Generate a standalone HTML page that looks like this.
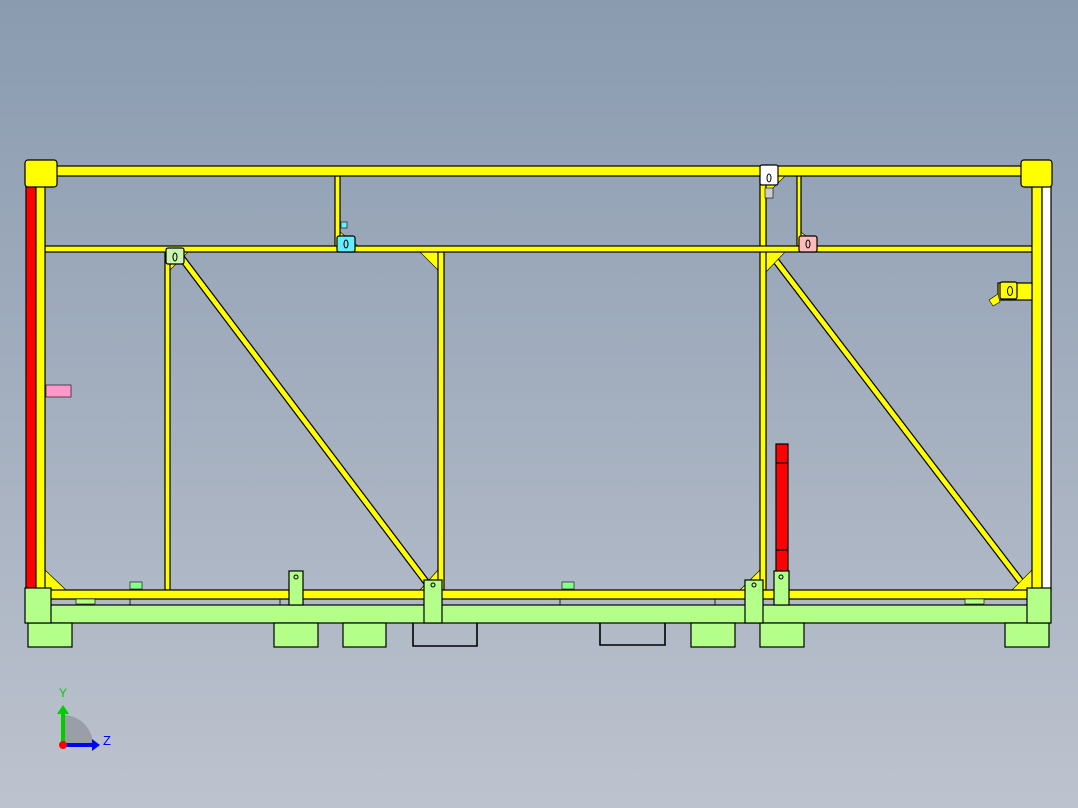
<!DOCTYPE html>
<html><head><meta charset="utf-8"><style>
html,body{margin:0;padding:0;width:1078px;height:808px;overflow:hidden}
body{background:linear-gradient(#8a9bb0,#bdc3ce);}
svg{position:absolute;left:0;top:0}
</style></head><body>
<svg width="1078" height="808" viewBox="0 0 1078 808">
<g stroke="#000" stroke-width="1.2">
<!-- diagonals -->
<polygon points="178,258 184,256 433,586 427,588" fill="#ff0"/>
<polygon points="770,258 776,256 1028,586 1022,588" fill="#ff0"/>
<!-- gussets -->
<polygon points="420,252 438,252 438,270" fill="#ff0" stroke-width="0.6"/>
<polygon points="766,252 785,252 766,272" fill="#ff0" stroke-width="0.6"/>
<polygon points="170,252 188,252 170,270" fill="#ff0" stroke-width="0.6"/>
<polygon points="766,176 785,176 766,195" fill="#ff0" stroke-width="0.6"/>
<polygon points="45,570 66,590 45,590" fill="#ff0" stroke-width="0.6"/>
<polygon points="1032,570 1012,590 1032,590" fill="#ff0" stroke-width="0.6"/>
<polygon points="438,570 420,590 438,590" fill="#ff0" stroke-width="0.6"/>
<polygon points="760,570 740,590 760,590" fill="#ff0" stroke-width="0.6"/>
<polygon points="340,232 340,246 358,246" fill="#ff0" stroke-width="0.6"/>
<polygon points="801,232 801,246 818,246" fill="#ff0" stroke-width="0.6"/>
<!-- verticals -->
<rect x="165" y="252" width="5" height="338" fill="#ff0"/>
<rect x="438" y="252" width="6" height="338" fill="#ff0"/>
<rect x="760" y="176" width="6" height="414" fill="#ff0"/>
<rect x="335" y="176" width="5" height="70" fill="#ff0"/>
<rect x="797" y="176" width="4" height="70" fill="#ff0"/>
<!-- middle rail -->
<rect x="45" y="246" width="987" height="6" fill="#ff0"/>
<!-- top rail -->
<rect x="55" y="166" width="967" height="10" fill="#ff0"/>
<!-- left column -->
<rect x="26" y="186" width="10" height="404" fill="#f00"/>
<rect x="36" y="186" width="9" height="404" fill="#ff0"/>
<!-- right column -->
<rect x="1032" y="186" width="10" height="404" fill="#ff0"/>
<rect x="1042" y="186" width="9" height="404" fill="#fff"/>
<!-- corners -->
<rect x="25" y="160" width="32" height="27" rx="3" fill="#ff0"/>
<rect x="1021" y="160" width="31" height="27" rx="3" fill="#ff0"/>
<!-- clamps -->
<rect x="166" y="248" width="18" height="16" rx="2" fill="#c8f5b0"/>
<rect x="337" y="236" width="18" height="16" rx="2" fill="#6ef"/>
<rect x="341" y="222" width="6" height="6" fill="#6ef" stroke-width="0.6"/>
<rect x="799" y="236" width="18" height="16" rx="2" fill="#fbb"/>
<rect x="760" y="165" width="18" height="20" rx="2" fill="#fff"/>
<rect x="765" y="188" width="8" height="10" fill="#ccc" stroke-width="0.6"/>
<rect x="998" y="283" width="34" height="17" fill="#ff0"/>
<rect x="1000" y="282" width="17" height="17" rx="2" fill="#ff0"/>
<polygon points="989,300 998,294 1000,302 993,306" fill="#ff0" stroke-width="0.6"/>
<rect x="46" y="385" width="25" height="12" fill="#f9c" stroke-width="0.6"/>
<!-- ovals -->
<g fill="none" stroke-width="1"><ellipse cx="175" cy="257" rx="2" ry="4"/><ellipse cx="346" cy="244" rx="2" ry="4"/><ellipse cx="808" cy="244" rx="2" ry="4"/><ellipse cx="769" cy="178" rx="2" ry="4"/><ellipse cx="1010" cy="291" rx="2.5" ry="4.5"/></g>
<!-- red cylinder -->
<rect x="776" y="444" width="12" height="127" fill="#f00"/>
<line x1="776" y1="463" x2="788" y2="463"/>
<line x1="776" y1="550" x2="788" y2="550"/>
<!-- bottom yellow rail -->
<rect x="50" y="590" width="978" height="9" fill="#ff0"/>
<!-- little bits under rail -->
<rect x="76" y="599" width="19" height="5" fill="#b3ff8a" stroke-width="0.6"/>
<rect x="965" y="599" width="19" height="5" fill="#b3ff8a" stroke-width="0.6"/>
<rect x="130" y="599" width="150" height="6" fill="none" stroke-width="0.8"/>
<rect x="560" y="599" width="155" height="6" fill="none" stroke-width="0.8"/>
<rect x="130" y="582" width="12" height="7" fill="#8f8" stroke-width="0.6"/>
<rect x="562" y="582" width="12" height="7" fill="#8f8" stroke-width="0.6"/>
<!-- green base beam -->
<rect x="50" y="605" width="978" height="18" fill="#b3ff8a"/>
<!-- pads -->
<g fill="#b3ff8a">
<rect x="28" y="623" width="44" height="24"/>
<rect x="274" y="623" width="44" height="24"/>
<rect x="343" y="623" width="43" height="24"/>
<rect x="691" y="623" width="44" height="24"/>
<rect x="760" y="623" width="44" height="24"/>
<rect x="1005" y="623" width="44" height="24"/>
</g>
<path d="M413 623 V646 H477 V623" fill="none" stroke-width="1.6"/>
<path d="M600 623 V645 H665 V623" fill="none" stroke-width="1.6"/>
<!-- uprights -->
<rect x="289" y="571" width="14" height="34" fill="#b3ff8a"/>
<rect x="774" y="571" width="15" height="34" fill="#b3ff8a"/>
<rect x="424" y="580" width="18" height="43" fill="#b3ff8a"/>
<rect x="745" y="580" width="18" height="43" fill="#b3ff8a"/>
<rect x="25" y="588" width="26" height="35" fill="#b3ff8a"/>
<rect x="1027" y="588" width="24" height="35" fill="#b3ff8a"/>
<g fill="none" stroke-width="1"><circle cx="296" cy="577" r="2"/><circle cx="781" cy="577" r="2"/><circle cx="433" cy="585" r="2"/><circle cx="754" cy="585" r="2"/></g>
</g>
<!-- axis triad -->
<path d="M63 745 V715 A30 30 0 0 1 93 745 Z" fill="#8d9099" opacity="0.7"/>
<rect x="61" y="712" width="4" height="33" fill="#0c0"/>
<polygon points="57,714 63,705 69,714" fill="#0c0"/>
<rect x="63" y="743" width="30" height="4" fill="#00f"/>
<polygon points="92,739 100,745 92,751" fill="#00f"/>
<circle cx="63" cy="745" r="4" fill="#f00"/>
<text x="59" y="697" font-family="Liberation Sans,sans-serif" font-size="12" fill="#0c0">Y</text>
<text x="103" y="745" font-family="Liberation Sans,sans-serif" font-size="13" fill="#00f">Z</text>
</svg>
</body></html>
